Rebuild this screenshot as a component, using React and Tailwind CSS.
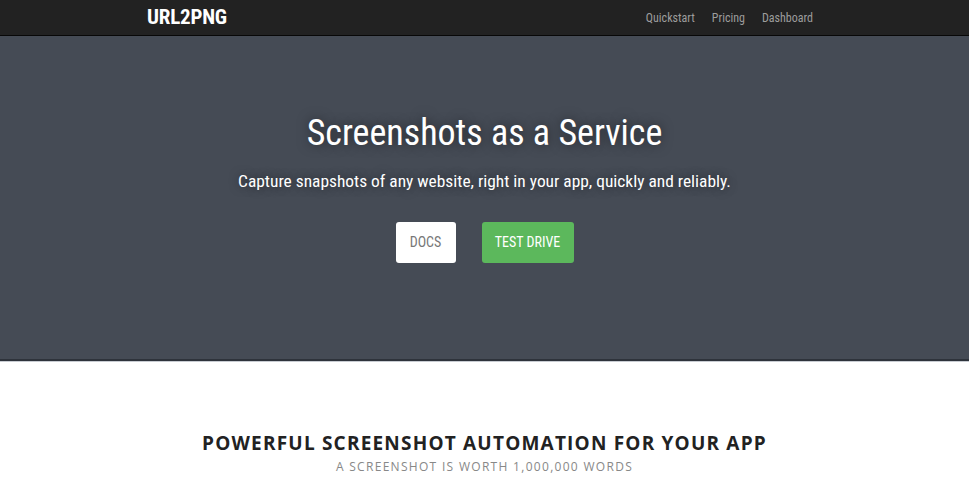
export default function App() {
  return (
    <div className="min-h-[493px] bg-white font-['Roboto_Condensed','Liberation_Sans_Narrow',Roboto,sans-serif]">
      <nav className="h-[36px] bg-[#222222] border-b border-[#080808]">
        <div className="mx-auto w-[970px] pl-[147px] pr-[157px] flex items-center justify-between h-full">
          <span className="text-white text-[21px] font-bold tracking-[-0.2px] leading-none">URL2PNG</span>
          <div className="flex gap-[17px] text-[12px] text-[#9d9d9d]">
            <span>Quickstart</span>
            <span>Pricing</span>
            <span>Dashboard</span>
          </div>
        </div>
      </nav>
      <section className="h-[325px] bg-[#454b55] border-b-2 border-[#2e333b] flex flex-col items-center pt-[75px]">
        <h1 className="text-white text-[36px] leading-[44px] [text-shadow:0_0_12px_rgba(0,0,0,0.5)]">Screenshots as a Service</h1>
        <p className="mt-[14px] text-white text-[17.4px] leading-[24px] [text-shadow:0_0_10px_rgba(0,0,0,0.5)]">Capture snapshots of any website, right in your app, quickly and reliably.</p>
        <div className="mt-[29px] flex gap-[26px]">
          <button className="w-[60px] h-[41px] bg-white rounded-[3px] text-[#777] text-[14px]">DOCS</button>
          <button className="w-[92px] h-[41px] bg-[#5cb85c] rounded-[3px] text-white text-[14px]">TEST DRIVE</button>
        </div>
      </section>
      <div className="h-px bg-[#c8ccd2]"></div>
      <section className="flex flex-col items-center pt-[68px] font-['Open_Sans',sans-serif]">
        <h2 className="text-[#222] text-[19px] font-bold tracking-[1.2px] leading-[26px]">POWERFUL SCREENSHOT AUTOMATION FOR YOUR APP</h2>
        <p className="mt-[2px] text-[#888] text-[12px] tracking-[1.3px]">A SCREENSHOT IS WORTH 1,000,000 WORDS</p>
      </section>
    </div>
  );
}
